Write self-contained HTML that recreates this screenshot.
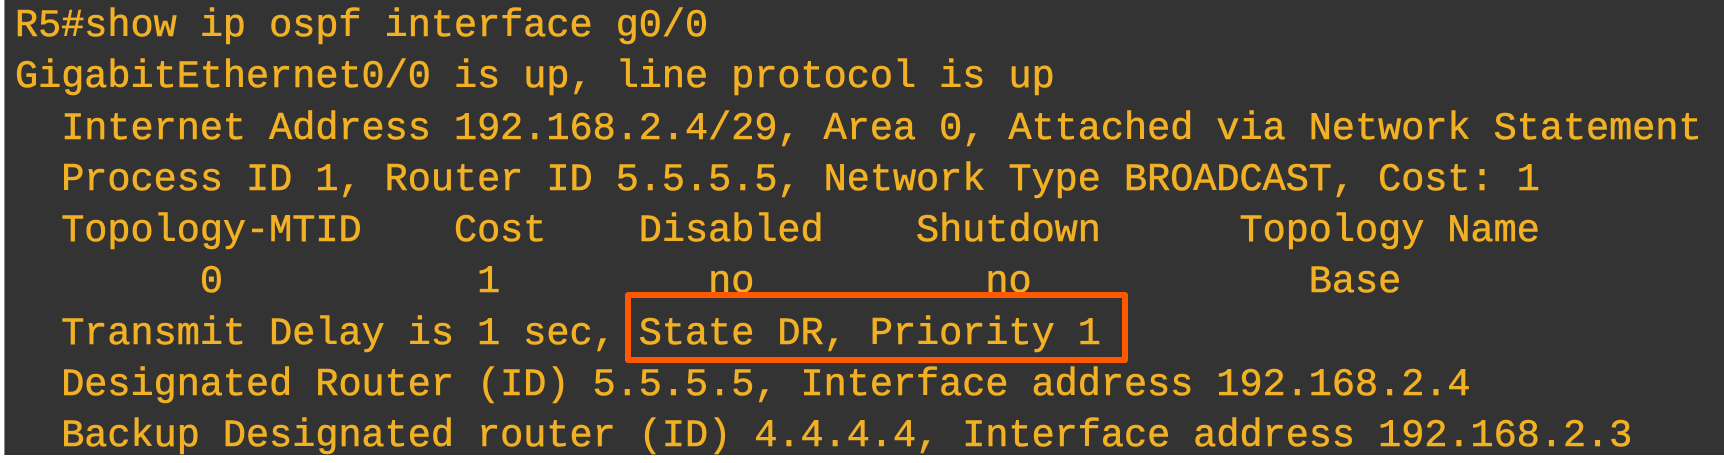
<!DOCTYPE html>
<html><head><style>
html,body{margin:0;padding:0;}
body{width:1724px;height:455px;background:#fff;position:relative;overflow:hidden;}
.bg{position:absolute;left:5px;top:0;width:1719px;height:455px;background:#333333;}
.edge{position:absolute;left:4px;top:0;width:1px;height:455px;background:#888;}
pre{position:absolute;left:15px;top:1px;margin:0;font-family:"Liberation Mono",monospace;font-size:38.5px;line-height:51.3px;color:#f2b124;-webkit-text-stroke:0.6px #f2b124;}
.box{position:absolute;left:625px;top:292px;width:491px;height:59px;border:6px solid #ff5800;border-radius:3px;}
</style></head><body>
<div class="bg"></div><div class="edge"></div>
<pre>R5#show ip ospf interface g0/0
GigabitEthernet0/0 is up, line protocol is up
  Internet Address 192.168.2.4/29, Area 0, Attached via Network Statement
  Process ID 1, Router ID 5.5.5.5, Network Type BROADCAST, Cost: 1
  Topology-MTID    Cost    Disabled    Shutdown      Topology Name
        0           1         no          no            Base
  Transmit Delay is 1 sec, State DR, Priority 1
  Designated Router (ID) 5.5.5.5, Interface address 192.168.2.4
  Backup Designated router (ID) 4.4.4.4, Interface address 192.168.2.3</pre>
<div class="box"></div>
</body></html>
